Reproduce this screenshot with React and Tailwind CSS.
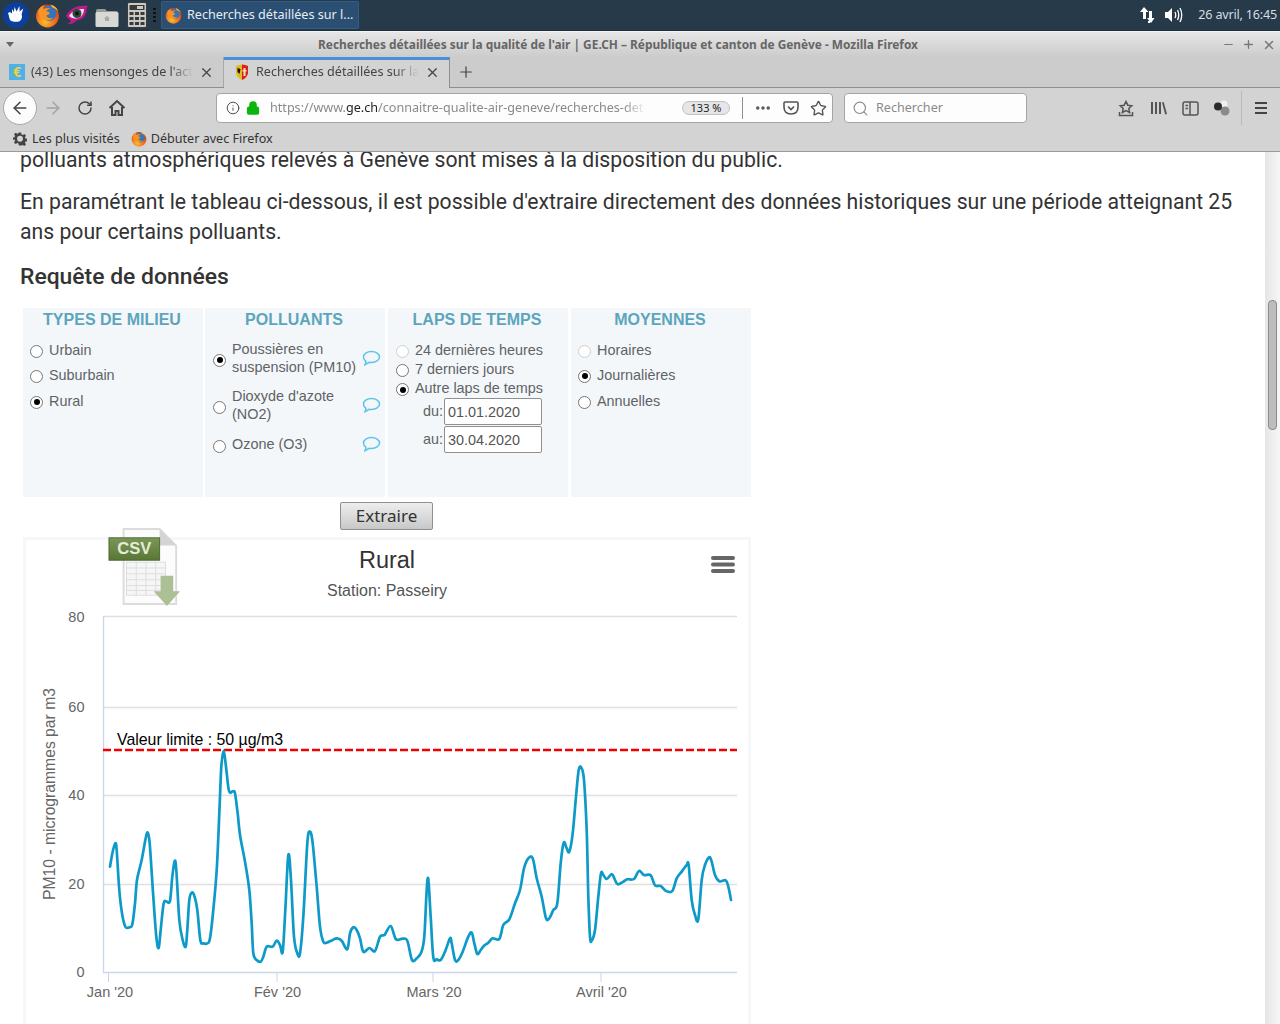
import { useId } from "react";
import { ArrowLeft, ArrowRight, RotateCw, Info, Lock, Search, Star, X, Plus, Minus, MoreHorizontal } from "lucide-react";

// points read off the reference, page coordinates
const SERIES_A = [[60,410],[68,365],[76,340],[80,360],[88,480],[96,550],[106,590],[118,592],[127,583],[135,520],[141,450],[155,390],[167,325],[173,308],[179,340],[190,500],[199,620],[206,654],[212,600],[221,520],[230,515],[240,513],[247,440],[254,393],[259,420],[268,570],[278,630],[287,650],[292,600],[298,510],[305,488],[313,497],[322,540],[331,630],[340,640],[352,640],[360,625],[370,540],[380,420],[388,250],[394,110],[401,62],[408,110],[417,183],[428,184],[435,190],[443,250],[450,315],[465,395],[478,480],[485,580],[490,670],[500,690],[512,695],[520,680],[530,650],[548,650],[560,632],[570,645],[578,665],[586,540],[595,375],[603,450],[612,620],[622,670],[630,670],[640,560],[652,340],[660,305],[668,340],[680,470],[690,590],[700,635],[710,638],[728,630],[740,625],[755,632],[772,658],[780,610],[790,592],[800,600],[810,625],[820,665],[838,654],[855,663],[870,620],[884,614],[902,588],[918,628],[938,626],[952,632],[966,690],[980,685],[994,667],[1003,620],[1010,480]];
const SERIES_B = [[25,448],[32,560],[40,682],[50,688],[62,690],[75,665],[90,625],[95,640],[105,690],[115,690],[128,665],[145,620],[155,608],[163,640],[172,672],[182,660],[192,647],[205,638],[218,625],[238,627],[250,585],[268,568],[285,520],[300,480],[312,415],[325,385],[338,385],[350,445],[365,500],[378,565],[388,565],[400,540],[412,520],[422,400],[431,338],[440,355],[448,365],[458,310],[468,200],[476,120],[484,113],[492,150],[500,300],[505,500],[510,620],[515,632],[525,600],[535,500],[543,430],[550,435],[560,447],[575,432],[583,445],[593,463],[610,455],[622,448],[642,447],[657,423],[672,435],[692,436],[705,466],[722,468],[738,483],[757,483],[770,445],[785,425],[800,405],[806,405],[815,510],[825,555],[835,568],[845,450],[855,405],[868,382],[875,395],[885,435],[898,454],[917,451],[925,470],[933,510]];

const POINTS = [
  ...SERIES_A.map(([x, y]) => [x / 3 + 90, y / 3 + 730]),
  ...SERIES_B.map(([x, y]) => [x / 3 + 420, y / 3 + 730]),
];

const smoothPath = (pts) => {
  let d = `M${pts[0][0].toFixed(1)} ${pts[0][1].toFixed(1)}`;
  for (let i = 0; i < pts.length - 1; i++) {
    const p0 = pts[i - 1] || pts[i];
    const p1 = pts[i];
    const p2 = pts[i + 1];
    const p3 = pts[i + 2] || p2;
    const c1x = p1[0] + (p2[0] - p0[0]) / 6;
    const c1y = p1[1] + (p2[1] - p0[1]) / 6;
    const c2x = p2[0] - (p3[0] - p1[0]) / 6;
    const c2y = p2[1] - (p3[1] - p1[1]) / 6;
    d += `C${c1x.toFixed(1)} ${c1y.toFixed(1)} ${c2x.toFixed(1)} ${c2y.toFixed(1)} ${p2[0].toFixed(1)} ${p2[1].toFixed(1)}`;
  }
  return d;
};

function FirefoxIcon({ size = 24 }) {
  const id = useId();
  return (
    <svg width={size} height={size} viewBox="0 0 24 24" className="shrink-0">
      <defs>
        <radialGradient id={id} cx="0.4" cy="0.75" r="0.8">
          <stop offset="0" stopColor="#fcc02c" />
          <stop offset="0.55" stopColor="#f0681f" />
          <stop offset="1" stopColor="#c8321c" />
        </radialGradient>
      </defs>
      <circle cx="12" cy="12.5" r="11" style={{ fill: `url(#${id})` }} />
      <circle cx="13.5" cy="10" r="7.2" fill="#3a72b8" />
      <path d="M3 8c1-3 3-5 6-6-1 1.500-1.300 3-1 4 2-1.300 5-1.500 7-.5-1.500.3-3.500 1-4.200 2.300 1 .5 2.700.4 3.200 1.500.3 1.500-1.500 2.200-3 2.400.2 2.500 3.500 3.600 6.500 2.300-1.800 3-7 3.800-10 1.200C4.500 14.200 3 11.500 3 8z" fill="#f79422" />
      <path d="M15 1.500c3.200.8 6.500 3.500 7.500 7-1.600-2.300-3.600-3.800-6-4.400z" fill="#fbc02d" />
    </svg>
  );
}

function TaskbarIcons() {
  return (
    <div className="flex items-center pl-[3px]">
      {/* xfce mouse */}
      <svg width="26" height="26" viewBox="0 0 26 26" className="shrink-0">
        <circle cx="13" cy="13" r="13" fill="#0c3f9c" />
        <path d="M5 11l2-1 2 1.500 0-4.500 1.800 3 .8-5 2 4.500 2.800-5.500.2 5.500 3.600-3-1.600 6c1 2 .2 5-1.600 6.400-2.600 1.400-7 1.200-9.600-.4C6 16.500 6 13 5 11z" fill="#fff" />
      </svg>
      <span className="ml-[6px] flex"><FirefoxIcon size={25} /></span>
      {/* eye */}
      <svg width="24" height="24" viewBox="0 0 24 24" className="shrink-0 ml-[5px]">
        <path d="M1 13C5 5 13 2 23 3c-1 1-1.500 2-1.500 3 .8 5-3.500 11-10 11.500-2.500 3-5.500 3.500-9 3.500 2-1 3-2 3.500-3.500C4.500 16.500 2.500 15 1 13z" fill="#c2188f" />
        <path d="M4 13c3-5 8-7 15-7 0 5-3 9-8 9.500-3 .3-5-.8-7-2.500z" fill="#f3e6ef" />
        <circle cx="12" cy="10.500" r="4.500" fill="#2f4a3a" />
        <circle cx="12" cy="10.500" r="2" fill="#0d1a14" />
      </svg>
      {/* folder */}
      <svg width="24" height="22" viewBox="0 0 24 22" className="shrink-0 ml-[6px] mt-[3px]">
        <path d="M1 5q0-2 2-2h7l2 2h9q2 0 2 2v2H1z" fill="#9a9a96" />
        <rect x="0.500" y="6" width="23" height="15" rx="1.500" fill="#d8d8d4" />
        <path d="M12 10l3 2.500h-1V15h-4v-2.500H9z" fill="#a9a9a5" />
      </svg>
      {/* calculator */}
      <svg width="20" height="26" viewBox="0 0 20 26" className="shrink-0 ml-[8px]">
        <rect x="0.500" y="0.500" width="19" height="25" rx="1.500" fill="#c9c9c5" stroke="#3b3b3b" />
        <rect x="2.500" y="3" width="15" height="5" fill="#3a3a3a" />
        <rect x="10" y="4" width="6" height="3" fill="#c9c9c5" />
        <g fill="#3a3a3a">
          <rect x="2.500" y="10" width="4" height="3" /><rect x="8" y="10" width="4" height="3" /><rect x="13.500" y="10" width="4" height="3" />
          <rect x="2.500" y="15" width="4" height="3" /><rect x="8" y="15" width="4" height="3" /><rect x="13.500" y="15" width="4" height="3" />
          <rect x="2.500" y="20" width="4" height="3" /><rect x="8" y="20" width="4" height="3" /><rect x="13.500" y="20" width="4" height="3" />
        </g>
      </svg>
      <div className="flex flex-col gap-[2px] ml-[6px]">
        <span className="w-[3px] h-[2px] bg-[#111]" />
        <span className="w-[3px] h-[2px] bg-[#111]" />
        <span className="w-[3px] h-[2px] bg-[#111]" />
        <span className="w-[3px] h-[2px] bg-[#111]" />
      </div>
    </div>
  );
}

function Taskbar() {
  return (
    <div className="h-[31px] bg-[#263a4a] flex items-center text-[#e8edf1] text-[12.6px] shrink-0 border-b border-[#1e2f3c]">
      <TaskbarIcons />
      <div className="ml-[5px] w-[198px] h-[28px] bg-[#2b4f72] border border-[#335d85] rounded-[2px] flex items-center pl-[3px] gap-[5px] whitespace-nowrap">
        <FirefoxIcon size={17} />
        <span>Recherches détaillées sur l...</span>
      </div>
      <div className="ml-auto flex items-center pr-[3px]">
        <svg width="18" height="18" viewBox="0 0 18 18" className="mr-[7px]">
          <path d="M5 1l4.500 5H7v7H4V6H1z" fill="#fff" />
          <path d="M10 5h3v7h2.500L12 17l-4-5h2z" fill="#fff" />
          <rect x="9" y="15" width="2" height="2" fill="#fff" />
        </svg>
        <svg width="20" height="18" viewBox="0 0 20 18" fill="none" stroke="#fff" strokeWidth="1.300" className="mr-[14px]">
          <path d="M1 6h3l4-4v14l-4-4H1z" fill="#fff" stroke="none" />
          <path d="M11 6q1.500 3 0 6M13.500 4q2.500 5 0 10M16 2q3.500 7 0 14" />
        </svg>
        <span className="text-[#d5dde3] tracking-[-0.2px]">26 avril, 16:45</span>
      </div>
    </div>
  );
}

function TitleBar() {
  return (
    <div className="h-[26px] bg-gradient-to-b from-[#e6e6e6] to-[#cccccc] border-t border-[#f4f4f4] flex items-center shrink-0">
      <span className="ml-[6px] w-0 h-0 border-x-[4px] border-x-transparent border-t-[5px] border-t-[#666]" />
      <div className="flex-1 text-center font-bold text-[11.9px] text-[#666]">
        Recherches détaillées sur la qualité de l'air | GE.CH – République et canton de Genève - Mozilla Firefox
      </div>
      <div className="flex items-center gap-[7px] pr-[4px] text-[#777]">
        <Minus size={13} strokeWidth={2} />
        <Plus size={13} strokeWidth={2.500} />
        <X size={14} strokeWidth={2.500} />
      </div>
    </div>
  );
}

function GenevaIcon() {
  return (
    <svg width="14" height="16" viewBox="0 0 14 16" className="shrink-0">
      <path d="M1 2q6-3 12 0v7q-1 5-6 7-5-2-6-7z" fill="#e2b91e" />
      <path d="M7 .5q3 0 6 1.500v7q-1 5-6 7z" fill="#d81f26" />
      <path d="M2.500 4l3 1-1 5-2-2z" fill="#111" />
      <rect x="8.500" y="4" width="2" height="8" fill="#f3e6b0" />
      <rect x="7.500" y="6" width="4" height="1.500" fill="#f3e6b0" />
    </svg>
  );
}

function TabBar() {
  return (
    <div className="h-[31px] bg-[#cccccc] border-b border-[#8f8f8f] flex items-stretch text-[12.6px] shrink-0">
      <div className="w-[224px] flex items-center pl-[9px] border-r border-[#a8a8a8] text-[#444]">
        <span className="w-[16px] h-[16px] bg-[#4fb2e6] text-[#f2d23c] text-[14px] leading-[16px] font-bold text-center shrink-0">€</span>
        <span className="ml-[6px] w-[165px] whitespace-nowrap [mask-image:linear-gradient(to_right,black_85%,transparent_98%)]">(43) Les mensonges de l'acti</span>
        <X size={15} strokeWidth={2} className="ml-[3px] text-[#444]" />
      </div>
      <div className="w-[226px] -mb-[1px] bg-[#d3d3d3] border-t-[3px] border-t-[#4a90d9] border-r border-r-[#8f8f8f] flex items-center pl-[11px] text-[#444] pb-[4px]">
        <GenevaIcon />
        <span className="ml-[7px] w-[163px] overflow-hidden whitespace-nowrap [mask-image:linear-gradient(to_right,black_85%,transparent)]">Recherches détaillées sur la</span>
        <X size={15} strokeWidth={2} className="ml-[6px] text-[#444]" />
      </div>
      <div className="w-[32px] flex items-center justify-center text-[#444]">
        <Plus size={18} strokeWidth={1.600} />
      </div>
    </div>
  );
}

function PocketIcon() {
  return (
    <svg width="16" height="16" viewBox="0 0 16 16" fill="none" stroke="#555" strokeWidth="1.600">
      <path d="M2 2h12q1 0 1 1v4q0 7-7 7T1 7V3q0-1 1-1z" />
      <path d="M5 6.500l3 3 3-3" />
    </svg>
  );
}

function ToolbarRightIcons() {
  return (
    <div className="flex items-center ml-auto text-[#555] h-full">
      <svg width="16" height="17" viewBox="0 0 16 17" fill="none" stroke="#555" strokeWidth="1.500" className="mr-[16px]">
        <path d="M8 1.500l1.800 3.700 4 .5-3 2.800.8 4-3.600-2-3.600 2 .8-4-3-2.800 4-.5z" />
        <path d="M1.500 12v3.500h13V12" />
      </svg>
      <svg width="17" height="16" viewBox="0 0 17 16" fill="#555" className="mr-[15px]">
        <rect x="1" y="2" width="2" height="12" /><rect x="5" y="2" width="2" height="12" /><rect x="9" y="2" width="2" height="12" />
        <path d="M12 2.500l1.700-.5 3.300 12-1.800.4z" />
      </svg>
      <svg width="17" height="15" viewBox="0 0 17 15" fill="none" stroke="#555" strokeWidth="1.500" className="mr-[13px]">
        <rect x="1" y="1" width="15" height="13" rx="2" />
        <path d="M8 1v13M3.500 4.500H6M3.500 7.500H6" />
      </svg>
      <svg width="18" height="16" viewBox="0 0 18 16" className="mr-[11px]">
        <circle cx="12" cy="4" r="3.500" fill="#f0f0f0" />
        <circle cx="13" cy="11" r="4.500" fill="#8a8a8a" />
        <circle cx="6" cy="6.500" r="4" fill="#2b2b2b" />
      </svg>
      <span className="w-px h-[34px] bg-[#b9b9b9] mr-[13px]" />
      <div className="flex flex-col gap-[3px] mr-[8px]">
        <span className="w-[12px] h-[2px] bg-[#444]" />
        <span className="w-[12px] h-[2px] bg-[#444]" />
        <span className="w-[12px] h-[2px] bg-[#444]" />
      </div>
    </div>
  );
}

function NavBar() {
  return (
    <div className="h-[38px] bg-[#d3d3d3] flex items-center shrink-0 pl-[3px] pr-[5px] pt-[2px]">
      <div className="w-[34px] h-[34px] rounded-full bg-[#fcfcfc] border border-[#a8a8a8] flex items-center justify-center text-[#444] shrink-0">
        <ArrowLeft size={20} strokeWidth={1.800} />
      </div>
      <ArrowRight size={20} strokeWidth={1.800} className="ml-[6px] text-[#a3a3a3] shrink-0" />
      <RotateCw size={16} strokeWidth={2.200} className="ml-[14px] text-[#444] shrink-0" />
      <svg width="18" height="18" viewBox="0 0 18 18" fill="none" stroke="#444" strokeWidth="2" className="ml-[15px] shrink-0">
        <path d="M1.500 9L9 2l7.500 7" />
        <path d="M4 8v8h3.500v-4h3v4H14V8" />
      </svg>
      <div className="ml-[90px] w-[617px] h-[30px] bg-[#fdfdfd] border border-[#a5a5a5] rounded-[4px] flex items-center text-[12.6px] shrink-0">
        <Info size={14} strokeWidth={1.600} className="ml-[9px] text-[#444] shrink-0" />
        <Lock size={14} strokeWidth={3} className="ml-[6px] text-[#0cb40c] fill-[#0cb40c] shrink-0" />
        <span className="ml-[10px] mt-[1px] w-[376px] overflow-hidden whitespace-nowrap text-[#8a8a8a] [mask-image:linear-gradient(to_right,black_94%,transparent)]">
          https://www.<span className="text-[#222]">ge.ch</span>/connaitre-qualite-air-geneve/recherches-det
        </span>
        <span className="ml-[36px] w-[48px] h-[14px] rounded-full bg-[#e6e6e6] border border-[#c2c2c2] text-[11px] leading-[12px] text-center text-[#222] shrink-0">133 %</span>
        <span className="ml-[12px] w-px h-[22px] bg-[#8f8f8f] shrink-0" />
        <MoreHorizontal size={18} strokeWidth={2.600} className="ml-[11px] text-[#555] shrink-0" />
        <span className="ml-[11px] shrink-0 flex"><PocketIcon /></span>
        <Star size={17} strokeWidth={1.900} className="ml-[11px] text-[#555] shrink-0" />
      </div>
      <div className="ml-[11px] w-[183px] h-[30px] bg-[#fdfdfd] border border-[#a5a5a5] rounded-[4px] flex items-center text-[12.6px] text-[#8a8a8a] shrink-0">
        <Search size={17} strokeWidth={1.600} className="ml-[7px]" />
        <span className="ml-[7px] mt-[1px]">Rechercher</span>
      </div>
      <ToolbarRightIcons />
    </div>
  );
}

function BookmarksBar() {
  return (
    <div className="h-[26px] bg-[#d3d3d3] border-b border-[#9a9a9a] flex items-center pl-[13px] pt-[1px] text-[12.6px] text-[#333] shrink-0">
      <svg width="14" height="14" viewBox="0 0 24 24" fill="#444" className="shrink-0">
        <path d="M10 1h4l.6 3.200 2.200.9 2.700-1.800 2.800 2.800-1.800 2.700.9 2.200 3.200.6v4l-3.200.6-.9 2.200 1.800 2.700-2.800 2.800-2.700-1.800-2.200.9L14 23h-4l-.6-3.200-2.200-.9-2.700 1.800-2.800-2.800 1.800-2.700-.9-2.200L-.6 13.400v-4l3.200-.6.900-2.200-1.800-2.700L4.500 1.100l2.700 1.800 2.200-.9z" />
        <circle cx="12" cy="11.500" r="5" fill="#d3d3d3" />
      </svg>
      <span className="ml-[5px]">Les plus visités</span>
      <span className="ml-[11px] flex"><FirefoxIcon size={16} /></span>
      <span className="ml-[4px]">Débuter avec Firefox</span>
    </div>
  );
}

function Radio({ checked, faded, className = "" }) {
  return (
    <span
      className={`w-[13px] h-[13px] rounded-full border bg-white flex items-center justify-center shrink-0 ${
        faded ? "border-[#cfcfcf]" : "border-[#767676]"
      } ${className}`}
    >
      {checked && <span className="w-[6px] h-[6px] rounded-full bg-black" />}
    </span>
  );
}

function Bubble() {
  return (
    <svg width="19" height="16" viewBox="0 0 19 16" fill="none" stroke="#5cc4ea" strokeWidth="1.500" className="shrink-0">
      <path d="M9.500 1.500c4.500 0 8 2.400 8 5.500s-3.500 5.500-8 5.500c-.8 0-1.600-.1-2.300-.2L3 14.700l1-3.300C2.400 10.400 1.500 8.800 1.500 7c0-3.100 3.500-5.500 8-5.500z" />
    </svg>
  );
}

const Panel = ({ title, children }) => (
  <div className="w-[180px] h-[189px] bg-[#f3f7fa] shrink-0">
    <div className="text-center font-bold text-[16px] leading-[23px] text-[#5ca5bc] pr-[2px]">{title}</div>
    {children}
  </div>
);

const Choice = ({ label, checked, faded, className = "" }) => (
  <div className={`flex items-center gap-[6px] ${className}`}>
    <Radio checked={checked} faded={faded} className="mt-[2px]" />
    <span>{label}</span>
  </div>
);

const Pollutant = ({ label, checked, className = "" }) => (
  <div className={`flex items-center pl-[8px] pr-[4px] leading-[18px] ${className}`}>
    <Radio checked={checked} className="mt-[4px]" />
    <span className="ml-[6px] w-[130px] shrink-0">{label}</span>
    <span className="ml-auto -mt-[1px] flex"><Bubble /></span>
  </div>
);

function DateRow({ label, value }) {
  return (
    <div className="flex items-center pl-[35px] h-[28px]">
      <span className="mr-[1px]">{label}</span>
      <div className="w-[98px] h-[27px] bg-white border border-[#8f8f8f] rounded-[2px] px-[3px] leading-[26px] text-[#555]">{value}</div>
    </div>
  );
}

function FilterTable() {
  return (
    <div className="ml-[3px] flex text-[14.4px] text-[#5f6366] font-['Liberation_Sans',Arial,sans-serif]">
      <Panel title="TYPES DE MILIEU">
        <div className="pl-[7px] pt-[10px] flex flex-col leading-[18px]">
          <Choice label="Urbain" />
          <Choice label="Suburbain" className="mt-[7px]" />
          <Choice label="Rural" checked className="mt-[8px]" />
        </div>
      </Panel>
      <div className="w-[2px]" />
      <Panel title="POLLUANTS">
        <div className="pt-[9px]">
          <Pollutant label="Poussières en suspension (PM10)" checked />
          <Pollutant label="Dioxyde d'azote (NO2)" className="mt-[11px]" />
          <Pollutant label="Ozone (O3)" className="mt-[12px]" />
        </div>
      </Panel>
      <div className="w-[3px]" />
      <Panel title="LAPS DE TEMPS">
        <div className="pl-[8px] pt-[10px] leading-[19px]">
          <Choice label="24 dernières heures" faded />
          <Choice label="7 derniers jours" />
          <Choice label="Autre laps de temps" checked />
          <div className="-ml-[8px] -mt-[1px]">
            <DateRow label="du:" value="01.01.2020" />
            <DateRow label="au:" value="30.04.2020" />
          </div>
        </div>
      </Panel>
      <div className="w-[3px]" />
      <Panel title="MOYENNES">
        <div className="pl-[7px] pt-[10px] flex flex-col leading-[18px]">
          <Choice label="Horaires" faded />
          <Choice label="Journalières" checked className="mt-[7px]" />
          <Choice label="Annuelles" className="mt-[8px]" />
        </div>
      </Panel>
    </div>
  );
}

function CsvIcon() {
  return (
    <svg width="74" height="82" viewBox="0 0 76 84" className="absolute left-[82px] -top-[13px]">
      <defs>
        <linearGradient id="csvLabel" x1="0" y1="0" x2="0" y2="1">
          <stop offset="0" stopColor="#7b9758" />
          <stop offset="1" stopColor="#587634" />
        </linearGradient>
      </defs>
      <path d="M16 2h37l17 17v60H16z" fill="#fcfcfc" stroke="#dcdcdc" strokeWidth="2" />
      <path d="M53 2l17 17H55q-2 0-2-2z" fill="#d4d4d4" />
      <g stroke="#dddddd" strokeWidth="1" fill="#f6f6f6">
        <rect x="19" y="36" width="40" height="34" />
        <path d="M29 36v34M39 36v34M49 36v34M19 42h40M19 48h40M19 54h40M19 60h40M19 65h40" fill="none" />
      </g>
      <rect x="1" y="11" width="52" height="23" fill="url(#csvLabel)" stroke="#4d6a30" />
      <text x="27" y="28" textAnchor="middle" fontFamily="Liberation Sans" fontWeight="700" fontSize="17" fill="#e4ebd9">CSV</text>
      <path d="M54 50h13v16h7L60.500 81 47 66h7z" fill="#adc095" />
    </svg>
  );
}

// svg origin sits at the chart box, page x 26 / y 540
function Chart() {
  const ox = 26;
  const oy = 540;
  const grid = [616.5, 707.5, 795.5, 884.5];
  const ticks = [108.5, 277, 433, 601];
  const yLabels = [[80, 622], [60, 712], [40, 800], [20, 889], [0, 977]];
  const xLabels = [["Jan '20", 110], ["Fév '20", 277.500], ["Mars '20", 434], ["Avril '20", 601.500]];
  return (
    <svg width="724" height="484" viewBox={`${ox} ${oy} 724 484`} className="block font-['Liberation_Sans',Arial,sans-serif]">
      <text x="387" y="567.500" textAnchor="middle" fontSize="23.500" fill="#333">Rural</text>
      <text x="387" y="596" textAnchor="middle" fontSize="16" fill="#555">Station: Passeiry</text>
      <g fill="#666">
        <rect x="711" y="556" width="24" height="4" rx="2" />
        <rect x="711" y="562.500" width="24" height="4" rx="2" />
        <rect x="711" y="569" width="24" height="4" rx="2" />
      </g>
      {grid.map((y) => (
        <line key={y} x1="103" x2="737" y1={y} y2={y} stroke="#e0e0e0" strokeWidth="1.330" />
      ))}
      <line x1="103.500" x2="103.500" y1="616" y2="972" stroke="#ccd6eb" strokeWidth="1.330" />
      <line x1="103" x2="737" y1="972.500" y2="972.500" stroke="#ccd6eb" strokeWidth="1.330" />
      {ticks.map((x) => (
        <line key={x} x1={x} x2={x} y1="972" y2="982" stroke="#ccd6eb" />
      ))}
      {yLabels.map(([v, y]) => (
        <text key={v} x="84.500" y={y} textAnchor="end" fontSize="14.500" fill="#666">{v}</text>
      ))}
      {xLabels.map(([t, x]) => (
        <text key={t} x={x} y="997" textAnchor="middle" fontSize="14.500" fill="#666">{t}</text>
      ))}
      <text transform="translate(54.500 794) rotate(-90)" textAnchor="middle" fontSize="15.700" fill="#666">PM10 - microgrammes par m3</text>
      <line x1="103" x2="737" y1="750" y2="750" stroke="#f00000" strokeWidth="2.400" strokeDasharray="8 3" />
      <text x="117" y="745" fontSize="15.900" fill="#000">Valeur limite : 50 µg/m3</text>
      <path d={smoothPath(POINTS)} fill="none" stroke="#0e9ac8" strokeWidth="2.700" strokeLinejoin="round" strokeLinecap="round" />
    </svg>
  );
}

function Scrollbar() {
  return (
    <div className="w-[15px] shrink-0 bg-gradient-to-r from-[#e6e6e6] to-[#f6f6f6] pt-[148px] pl-[3px]">
      <div className="w-[9px] h-[130px] bg-[#bdbdbd] border border-[#8c8c8c] rounded-[4px]" />
    </div>
  );
}

export default function App() {
  return (
    <div className="w-[1280px] h-[1024px] overflow-hidden flex flex-col bg-white font-['Noto_Sans',sans-serif]">
      <Taskbar />
      <TitleBar />
      <TabBar />
      <NavBar />
      <BookmarksBar />
      <div className="flex-1 flex min-h-0">
        <main className="flex-1 overflow-hidden pl-[20px] text-[21.2px] leading-[30px] text-[#333] font-['Roboto',sans-serif]">
          <p className="-mt-[7px] whitespace-nowrap">polluants atmosphériques relevés à Genève sont mises à la disposition du public.</p>
          <p className="mt-[12px] w-[1225px]">
            En paramétrant le tableau ci-dessous, il est possible d'extraire directement des données historiques sur une période atteignant 25 ans pour certains polluants.
          </p>
          <h2 className="mt-[15px] text-[22.9px] font-medium">Requête de données</h2>
          <div className="mt-[16px]">
            <FilterTable />
          </div>
          <div className="w-[731px] flex justify-center mt-[5px]">
            <button className="h-[28px] w-[93px] ml-[2px] bg-gradient-to-b from-[#eeeeee] to-[#c8c8c8] border border-[#8f8f8f] rounded-[2px] text-[17px] leading-[26px] text-[#333] font-['Noto_Sans',sans-serif]">
              Extraire
            </button>
          </div>
          <div className="relative mt-[7px] ml-[3px] w-[728px] h-[490px] border-[3px] border-[#f5f8fb] bg-white">
            <CsvIcon />
            <Chart />
          </div>
        </main>
        <Scrollbar />
      </div>
    </div>
  );
}
